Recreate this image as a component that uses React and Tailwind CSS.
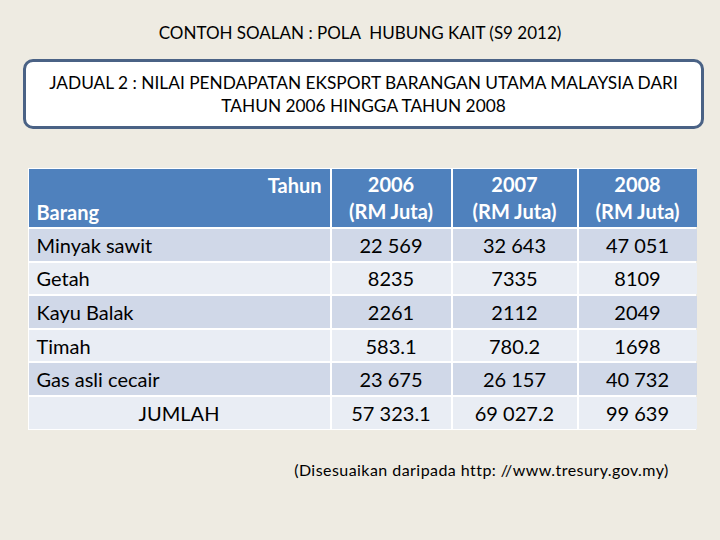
export default function App() {
  const rows = [
    ["Minyak sawit", "22 569", "32 643", "47 051"],
    ["Getah", "8235", "7335", "8109"],
    ["Kayu Balak", "2261", "2112", "2049"],
    ["Timah", "583.1", "780.2", "1698"],
    ["Gas asli cecair", "23 675", "26 157", "40 732"],
  ];
  const font = { fontFamily: "Lato, 'Open Sans', sans-serif" };
  return (
    <div className="w-[720px] h-[540px] bg-[#eeebe2] flex flex-col items-center text-black" style={font}>
      <div className="mt-[22px] h-[22px] text-[17px] leading-[22px] whitespace-pre">CONTOH SOALAN : POLA  HUBUNG KAIT (S9 2012)</div>
      <div className="mt-[15px] ml-[7px] w-[681px] h-[70px] bg-white border-[3px] border-[#4a6285] rounded-[10px] flex flex-col items-center justify-center text-[17.3px] leading-[23px]">
        <div>JADUAL 2 : NILAI PENDAPATAN EKSPORT BARANGAN UTAMA MALAYSIA DARI</div>
        <div>TAHUN 2006 HINGGA TAHUN 2008</div>
      </div>
      <div className="mt-[39px] ml-[3px] w-[668px] bg-white p-[1px] grid grid-cols-[301px_119px_124px_118px] gap-[2px] text-[20px]">
        <div className="bg-[#4f81bd] h-[58px] relative text-white font-bold">
          <span className="absolute right-[8px] top-[4px] leading-[24px]">Tahun</span>
          <span className="absolute left-[8px] bottom-[3px] leading-[24px]">Barang</span>
        </div>
        {["2006", "2007", "2008"].map((y) => (
          <div key={y} className="bg-[#4f81bd] h-[58px] flex flex-col items-center justify-center text-white font-bold leading-[27px]">
            <div>{y}</div>
            <div>(RM Juta)</div>
          </div>
        ))}
        {rows.map((r, i) => {
          const bg = i % 2 === 0 ? "bg-[#d0d8e8]" : "bg-[#e9edf4]";
          return [
            <div key={r[0]} className={`${bg} h-[31.6px] flex items-center pl-[8px] leading-none`}>{r[0]}</div>,
            ...r.slice(1).map((v, j) => (
              <div key={r[0] + j} className={`${bg} h-[31.6px] flex items-center justify-center leading-none`}>{v}</div>
            )),
          ];
        })}
        <div className="bg-[#e9edf4] h-[31.6px] flex items-center justify-center leading-none">JUMLAH</div>
        {["57 323.1", "69 027.2", "99 639"].map((v) => (
          <div key={v} className="bg-[#e9edf4] h-[31.6px] flex items-center justify-center leading-none">{v}</div>
        ))}
      </div>
      <div className="mt-[31px] ml-[243px] text-[16px] leading-[18px] tracking-[0.45px]">(Disesuaikan daripada http: //www.tresury.gov.my)</div>
    </div>
  );
}
